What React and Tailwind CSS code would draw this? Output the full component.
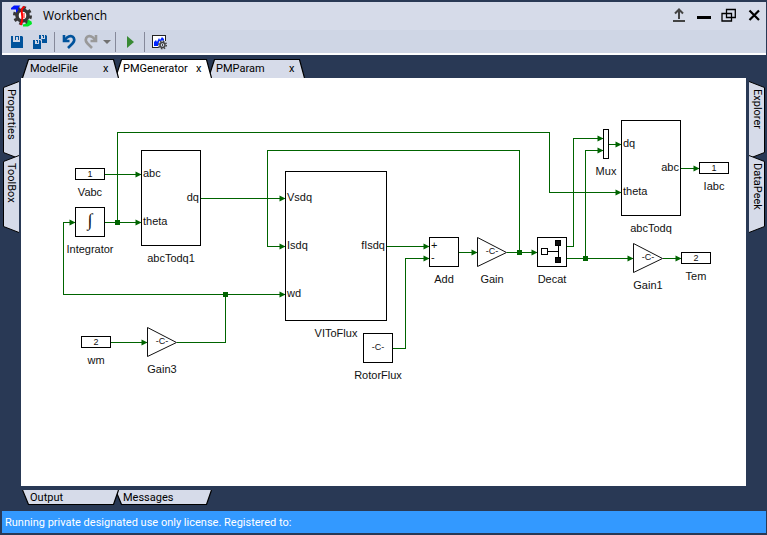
import { useState } from 'react'

const WIRE = '#006400'

/////////////////// diagram data
const blocks = [
  { name: 'Vabc', type: 'port', x: 54, y: 90, w: 29, h: 11, text: '1' },
  { name: 'Integrator', type: 'integral', x: 54, y: 129, w: 29, h: 29 },
  { name: 'abcTodq1', type: 'box', x: 120, y: 72, w: 59, h: 95, inputs: [['abc', 96], ['theta', 144]], outputs: [['dq', 120]] },
  { name: 'VIToFlux', type: 'box', x: 264, y: 93, w: 101, h: 149, inputs: [['Vsdq', 120], ['Isdq', 168], ['wd', 216]], outputs: [['fIsdq', 168]] },
  { name: 'RotorFlux', type: 'const', x: 342, y: 255, w: 29, h: 29, text: '-C-' },
  { name: 'Add', type: 'box', x: 408, y: 159, w: 29, h: 29, inputs: [['+', 168], ['-', 180]] },
  { name: 'Gain', type: 'gain', x: 456, y: 159, w: 29, h: 29, text: '-C-' },
  { name: 'Decat', type: 'split', x: 516, y: 159, w: 29, h: 29 },
  { name: 'Mux', type: 'box', x: 582, y: 51, w: 5, h: 29 },
  { name: 'abcTodq', type: 'box', x: 600, y: 42, w: 59, h: 95, inputs: [['dq', 66], ['theta', 114]], outputs: [['abc', 90]] },
  { name: 'Iabc', type: 'port', x: 678, y: 84, w: 29, h: 11, text: '1' },
  { name: 'Gain1', type: 'gain', x: 612, y: 165, w: 29, h: 29, text: '-C-' },
  { name: 'Tem', type: 'port', x: 660, y: 174, w: 29, h: 11, text: '2' },
  { name: 'wm', type: 'port', x: 60, y: 258, w: 29, h: 11, text: '2' },
  { name: 'Gain3', type: 'gain', x: 126, y: 249, w: 29, h: 29, text: '-C-' },
]

// the last point of a wire is where the arrow ends
const wires = [
  { points: [[83, 96], [120, 96]] },
  { points: [[83, 144], [120, 144]] },
  { points: [[96, 144], [96, 54], [528, 54], [528, 114], [600, 114]] },
  { points: [[179, 120], [264, 120]] },
  { points: [[204, 216], [42, 216], [42, 144], [54, 144]] },
  { points: [[89, 264], [126, 264]] },
  { points: [[155, 264], [204, 264], [204, 216], [264, 216]] },
  { points: [[498, 174], [498, 72], [246, 72], [246, 168], [264, 168]] },
  { points: [[365, 168], [408, 168]] },
  { points: [[371, 270], [384, 270], [384, 180], [408, 180]] },
  { points: [[437, 174], [456, 174]] },
  { points: [[485, 174], [516, 174]] },
  { points: [[545, 168], [552, 168], [552, 60], [582, 60]] },
  { points: [[545, 180], [612, 180]] },
  { points: [[564, 180], [564, 72], [582, 72]] },
  { points: [[587, 66], [600, 66]] },
  { points: [[659, 90], [678, 90]] },
  { points: [[641, 180], [660, 180]] },
]

const junctions = [[96, 144], [204, 216], [498, 174], [564, 180]]

const Wire = ({ points }) => {
  const [x, y] = points[points.length - 1]
  return (
    <g>
      <polyline points={points.join(' ')} fill="none" stroke={WIRE} shapeRendering="crispEdges" />
      <path d={`M${x} ${y}l-6 -3v6z`} fill={WIRE} />
    </g>
  )
}

const BlockShape = ({ block }) => {
  const { type, x, y, w, h } = block
  if (type === 'gain') {
    return <path d={`M${x} ${y}l${w} 15l-${w} 14z`} fill="#fff" stroke="#111" />
  }
  return (
    <g shapeRendering="crispEdges">
      <rect x={x} y={y} width={w} height={h} fill="#fff" stroke="#000" />
      {type === 'split' && (
        <g transform={`translate(${x} ${y})`} stroke="#000">
          <path d="M10 14H21M21 6V23" />
          <rect x="4" y="11" width="6" height="6" fill="#fff" />
          <rect x="18" y="3" width="5" height="5" />
          <rect x="18" y="20" width="5" height="5" />
        </g>
      )}
    </g>
  )
}

const BlockText = ({ block }) => {
  const { name, type, x, y, w, h, text, inputs = [], outputs = [] } = block
  const cx = x + Math.ceil(w / 2)
  return (
    <g>
      <text x={cx} y={y + h + 17} textAnchor="middle">{name}</text>
      {inputs.map(([label, py]) => (
        <text key={label} x={x + 2} y={py + 3}>{label}</text>
      ))}
      {outputs.map(([label, py]) => (
        <text key={label} x={x + w - 1} y={py + 3} textAnchor="end">{label}</text>
      ))}
      {text && (
        <text x={cx} y={type === 'port' ? y + 9 : y + 17} textAnchor="middle" className="text-[9px]">{text}</text>
      )}
      {type === 'integral' && (
        <text x={cx} y={y + 19} textAnchor="middle" className="font-['Liberation_Serif',serif] text-[18px]">∫</text>
      )}
    </g>
  )
}

const Diagram = () => (
  <svg width="725" height="400" className="block font-['Liberation_Sans',sans-serif] text-[11px]" fill="#111">
    {/* half a pixel so that the thin lines are sharp */}
    <g transform="translate(0.5 0.5)">
      {wires.map(({ points }) => <Wire key={points.join()} points={points} />)}
      {junctions.map(([x, y]) => (
        <rect key={`${x}-${y}`} x={x - 2} y={y - 2} width="4" height="4" fill={WIRE} stroke={WIRE} shapeRendering="crispEdges" />
      ))}
      {blocks.map((block) => <BlockShape key={block.name} block={block} />)}
    </g>
    {blocks.map((block) => <BlockText key={block.name} block={block} />)}
  </svg>
)

/////////////////// icons
const Logo = () => (
  <svg width="22" height="22" viewBox="0 0 22 22">
    <circle cx="11.500" cy="10.500" r="5.500" fill="#fff" stroke="#383838" strokeWidth="3.500" />
    <circle cx="11.500" cy="10.500" r="8" fill="none" stroke="#383838" strokeWidth="3" strokeDasharray="3.200 3.080" />
    <path d="M0 3L3 0.500H9.500L7 3L7.500 5L5 8V4.500H0Z" fill="#0014ff" />
    <path d="M12 19.500L16 18.500L17 14.500L20.500 16.500L21 19L17 21.500H12Z" fill="#00e626" />
    <path d="M13.500 1.500C10 3.500 10.500 6 11 9S12 16 9.500 20" fill="none" stroke="#f00" strokeWidth="2" />
    <path d="M13 8V13" stroke="#f33" strokeWidth="1.200" />
  </svg>
)

const SaveIcon = () => (
  <svg width="16" height="16" viewBox="0 0 16 16" fill="#00539c">
    <path d="M2 2H4V8H11V2H13L14 3V14H2Z" />
    <path d="M6 2H10V6H9V3H7V6H6Z" />
  </svg>
)

const SaveAllIcon = () => (
  <svg width="16" height="16" viewBox="0 0 16 16" fill="#00539c">
    <path d="M7 1H9V5H13V1H14L15 2V9H10V6L9 5H7Z" />
    <path d="M10 1H12V4H11V2H10Z" />
    <path d="M1 6H3V10H7V6H8L9 7V15H1Z" />
    <path d="M4 6H6V9H5V7H4Z" />
  </svg>
)

const UndoIcon = () => (
  <svg width="16" height="16" viewBox="0 0 16 16" fill="none" stroke="#00539c" strokeWidth="2.600">
    <path d="M3 1V7H8.500" />
    <path d="M3.500 6.500L6 3.500C8.500 1.500 11.500 1.700 12.800 4C13.800 6 13 8 11.500 9.500L7 14" />
  </svg>
)

const RedoIcon = () => (
  <svg width="16" height="16" viewBox="0 0 16 16" fill="none" stroke="#999" strokeWidth="2.600">
    <path d="M13 1V7H7.500" />
    <path d="M12.500 6.500L10 3.500C7.500 1.500 4.500 1.700 3.200 4C2.200 6 3 8 4.500 9.500L9 14" />
  </svg>
)

const CaretIcon = () => (
  <svg width="8" height="16" viewBox="0 0 8 16"><path d="M0 6H8L4 10Z" fill="#717171" /></svg>
)

const PlayIcon = () => (
  <svg width="16" height="16" viewBox="0 0 16 16"><path d="M5 2L12 8L5 14Z" fill="#388a34" /></svg>
)

const PlotSettingsIcon = () => (
  <svg width="16" height="16" viewBox="0 0 16 16">
    <path d="M1 1H15V7H14V2H2V13H8V14H1Z" fill="#222" />
    <path d="M2 2H14V7H8V13H2Z" fill="#fff" />
    <path d="M3 12V8L5 6L6 8L8 4L9 6L11 3L13 5V7H8V12Z" fill="#0026ff" />
    <circle cx="11.500" cy="11" r="4.500" fill="#cfd6e5" />
    <circle cx="11.500" cy="11" r="2.500" fill="none" stroke="#444" strokeWidth="1.400" />
    <circle cx="11.500" cy="11" r="3.800" fill="none" stroke="#444" strokeWidth="1.400" strokeDasharray="1.500 1.480" />
    <rect x="11" y="10" width="1" height="2" fill="#444" />
  </svg>
)

const UploadIcon = () => (
  <svg width="15" height="16" viewBox="0 0 15 16" fill="none" stroke="#444" strokeWidth="2">
    <path d="M8 1V11M4 5.500L8 1.500L12 5.500" />
    <path d="M2 13H14" />
  </svg>
)

const MinimizeIcon = () => (
  <svg width="15" height="16" viewBox="0 0 15 16"><path d="M1 8H15V11H1Z" /></svg>
)

const RestoreIcon = () => (
  <svg width="15" height="16" viewBox="0 0 15 16" fill="none" stroke="#000" strokeWidth="1.300">
    <path d="M5.500 1.500H14.300V9.500H5.500ZM1 5.500H10.500V13H1Z" />
  </svg>
)

const CloseIcon = () => (
  <svg width="15" height="16" viewBox="0 0 15 16"><path d="M3.500 2.500L13 12M13 2.500L3.500 12" stroke="#000" strokeWidth="2.200" /></svg>
)

/////////////////// tabs
const TopTab = ({ label, active, onSelect, layer }) => (
  <div className={`relative -mr-1 flex h-[19px] w-[97px] items-center ${layer}`}>
    <svg className="absolute inset-0" width="97" height="19" fill={active ? '#fff' : '#d6dbe9'}>
      <path d="M0.500 19L6.500 0.500H91.500L96.500 19" stroke="#000" strokeWidth="1.200" />
    </svg>
    <button onClick={onSelect} className="relative w-[78px] pl-2 text-left leading-4">{label}</button>
    <button aria-label={`Close ${label}`} className="relative ml-[3px] leading-4">x</button>
  </div>
)

const BottomTab = ({ label, layer }) => (
  <button className={`relative -mr-1 h-[15px] w-[97px] pl-2 text-left leading-[15px] ${layer}`}>
    <svg className="absolute inset-0" width="97" height="15" fill="#d6dbe9">
      <path d="M0.500 0L6.500 14.500H91.500L96.500 0" stroke="#000" strokeWidth="1.200" />
    </svg>
    <span className="relative">{label}</span>
  </button>
)

const SideTab = ({ label, right }) => (
  <button className="relative -mb-1 flex h-[78px] w-4 items-center justify-center pt-2 text-left">
    <svg className="absolute inset-0" width="16" height="78" fill="#d6dbe9">
      <path d={right ? 'M0 0.500L15.500 6.500V71.500L0 77.500' : 'M16 0.500L0.500 6.500V71.500L16 77.500'} stroke="#000" />
    </svg>
    <span className="relative h-full leading-4 [writing-mode:vertical-rl]">{label}</span>
  </button>
)

const ToolButton = ({ label, children, width = 'w-[22px]' }) => (
  <button aria-label={label} title={label} className={`flex h-full items-center justify-center ${width}`}>
    {children}
  </button>
)

const Separator = () => <div className="mx-[3px] h-5 w-px bg-[#85899a]" />

// a tab lies over the one at its right
const documents = [
  { name: 'ModelFile', layer: 'z-30' },
  { name: 'PMGenerator', layer: 'z-20' },
  { name: 'PMParam', layer: 'z-10' },
]

const App = () => {
  const [current, setCurrent] = useState('PMGenerator')

  return (
    <div className="flex min-h-screen flex-col bg-[#293955] py-0.5 pr-px pl-0.5 font-[Roboto,sans-serif] text-[11px] text-black">
      <header className="border-b-2 border-white">
        {/* title bar */}
        <div className="flex h-7 items-center bg-[#d6dbe9] pl-[9px]">
          <Logo />
          <h1 className="ml-2.5 flex-1 font-['Open_Sans',sans-serif] text-[12px] leading-4">Workbench</h1>
          <ToolButton label="Publish" width="w-[25px]"><UploadIcon /></ToolButton>
          <ToolButton label="Minimize" width="w-[25px]"><MinimizeIcon /></ToolButton>
          <ToolButton label="Restore" width="w-[25px]"><RestoreIcon /></ToolButton>
          <ToolButton label="Close" width="w-[25px]"><CloseIcon /></ToolButton>
        </div>

        {/* toolbar */}
        <div className="flex h-[23px] items-center bg-[#cfd6e5] pl-1">
          <div className="flex h-full gap-px">
            <ToolButton label="Save"><SaveIcon /></ToolButton>
            <ToolButton label="Save all"><SaveAllIcon /></ToolButton>
          </div>
          <Separator />
          <ToolButton label="Undo"><UndoIcon /></ToolButton>
          <ToolButton label="Redo"><RedoIcon /></ToolButton>
          <ToolButton label="Redo history" width="w-2.5"><CaretIcon /></ToolButton>
          <Separator />
          <ToolButton label="Run"><PlayIcon /></ToolButton>
          <Separator />
          <ToolButton label="Plot settings"><PlotSettingsIcon /></ToolButton>
        </div>
      </header>

      <div className="flex flex-1 pt-1 pb-1.5">
        <aside className="flex w-[19px] flex-col pt-[22px] pl-px">
          <SideTab label="Properties" />
          <SideTab label="ToolBox" />
        </aside>

        <div className="flex min-w-0 flex-1 flex-col">
          <nav className="flex pl-px">
            {documents.map(({ name, layer }) => (
              <TopTab
                key={name}
                label={name}
                layer={layer}
                active={name === current}
                onSelect={() => setCurrent(name)}
              />
            ))}
          </nav>
          <main className="flex-1 overflow-hidden bg-white">
            <Diagram />
          </main>
          <nav className="flex pt-1 pl-px">
            <BottomTab label="Output" layer="z-20" />
            <BottomTab label="Messages" layer="z-10" />
          </nav>
        </div>

        <aside className="flex w-5 flex-col pt-[22px] pl-[3px]">
          <SideTab label="Explorer" right />
          <SideTab label="DataPeek" right />
        </aside>
      </div>

      <footer className="h-[22px] bg-[#3399ff] px-[3px] leading-6 text-white">
        Running private designated use only license. Registered to:
      </footer>
    </div>
  )
}

export default App
